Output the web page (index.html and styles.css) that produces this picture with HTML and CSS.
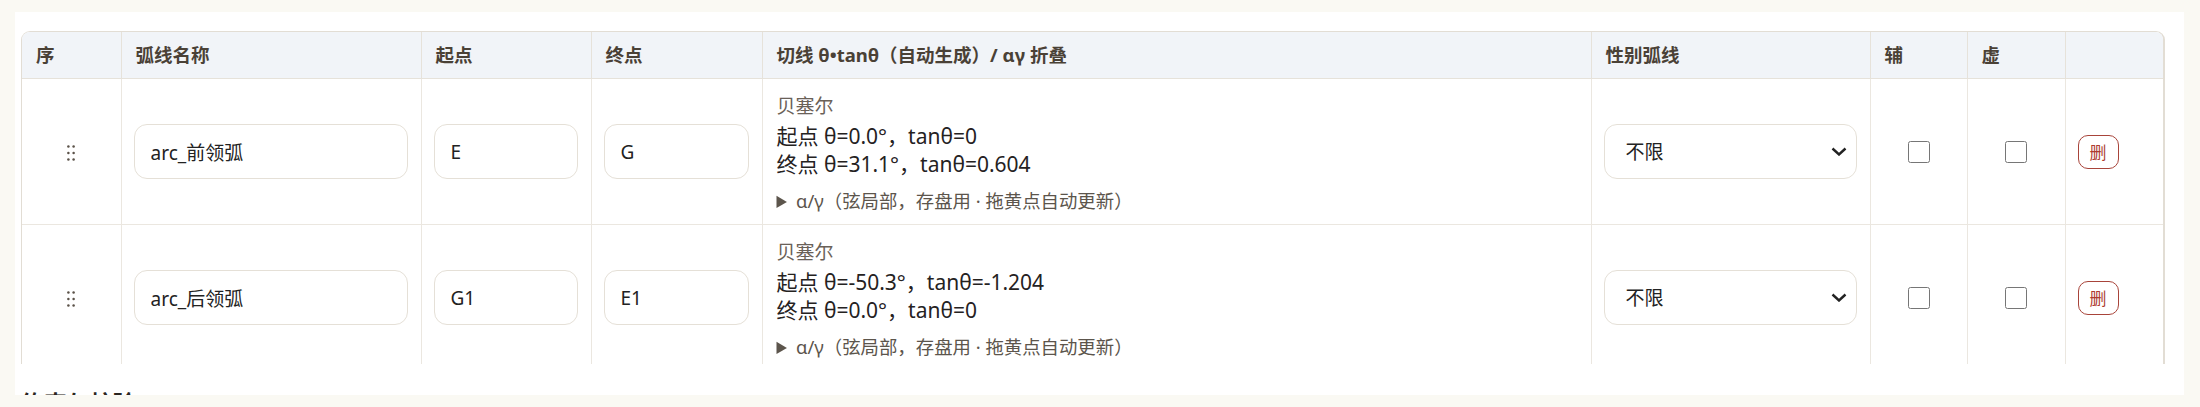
FILE: index.html
```html
<!DOCTYPE html>
<html lang="zh-CN">
<head>
  <meta charset="UTF-8">
  <meta name="viewport" content="width=device-width, initial-scale=1.0">
  <title>弧线编辑</title>
  <link rel="stylesheet" href="styles.css">
</head>
<body>
  <div class="card">

    <div class="table-wrap">
      <table class="arc-table">
        <colgroup>
          <col style="width: 99px">
          <col style="width: 300px">
          <col style="width: 170px">
          <col style="width: 171px">
          <col style="width: 829px">
          <col style="width: 279px">
          <col style="width: 97px">
          <col style="width: 98px">
          <col>
        </colgroup>
        <thead>
          <tr>
            <th>序</th>
            <th>弧线名称</th>
            <th>起点</th>
            <th>终点</th>
            <th>切线 θ•tanθ（自动生成）/ αγ 折叠</th>
            <th>性别弧线</th>
            <th>辅</th>
            <th>虚</th>
            <th></th>
          </tr>
        </thead>
        <tbody>
          <tr>
            <td class="handle-cell">
              <svg class="handle" viewBox="0 0 8 16">
                <circle cx="1.4" cy="1.5" r="1.25"></circle>
                <circle cx="6.6" cy="1.5" r="1.25"></circle>
                <circle cx="1.4" cy="8" r="1.25"></circle>
                <circle cx="6.6" cy="8" r="1.25"></circle>
                <circle cx="1.4" cy="14.5" r="1.25"></circle>
                <circle cx="6.6" cy="14.5" r="1.25"></circle>
              </svg>
            </td>
            <td><input class="field" type="text" value="arc_前领弧"></td>
            <td><input class="field" type="text" value="E"></td>
            <td><input class="field" type="text" value="G"></td>
            <td class="tangent-cell">
              <div class="curve-type">贝塞尔</div>
              <div class="tangent-line">起点 θ=0.0°，tanθ=0</div>
              <div class="tangent-line">终点 θ=31.1°，tanθ=0.604</div>
              <details class="alpha">
                <summary>α/γ（弦局部，存盘用 · 拖黄点自动更新）</summary>
              </details>
            </td>
            <td>
              <div class="select-box">
                <select class="field select">
                  <option>不限</option>
                </select>
                <svg class="chevron" viewBox="0 0 16 9"><path d="M1.5 1.5 L8 7.5 L14.5 1.5"></path></svg>
              </div>
            </td>
            <td class="check-cell"><input type="checkbox"></td>
            <td class="check-cell"><input type="checkbox"></td>
            <td><button class="del-btn">删</button></td>
          </tr>
          <tr>
            <td class="handle-cell">
              <svg class="handle" viewBox="0 0 8 16">
                <circle cx="1.4" cy="1.5" r="1.25"></circle>
                <circle cx="6.6" cy="1.5" r="1.25"></circle>
                <circle cx="1.4" cy="8" r="1.25"></circle>
                <circle cx="6.6" cy="8" r="1.25"></circle>
                <circle cx="1.4" cy="14.5" r="1.25"></circle>
                <circle cx="6.6" cy="14.5" r="1.25"></circle>
              </svg>
            </td>
            <td><input class="field" type="text" value="arc_后领弧"></td>
            <td><input class="field" type="text" value="G1"></td>
            <td><input class="field" type="text" value="E1"></td>
            <td class="tangent-cell">
              <div class="curve-type">贝塞尔</div>
              <div class="tangent-line">起点 θ=-50.3°，tanθ=-1.204</div>
              <div class="tangent-line">终点 θ=0.0°，tanθ=0</div>
              <details class="alpha">
                <summary>α/γ（弦局部，存盘用 · 拖黄点自动更新）</summary>
              </details>
            </td>
            <td>
              <div class="select-box">
                <select class="field select">
                  <option>不限</option>
                </select>
                <svg class="chevron" viewBox="0 0 16 9"><path d="M1.5 1.5 L8 7.5 L14.5 1.5"></path></svg>
              </div>
            </td>
            <td class="check-cell"><input type="checkbox"></td>
            <td class="check-cell"><input type="checkbox"></td>
            <td><button class="del-btn">删</button></td>
          </tr>
        </tbody>
      </table>
    </div>

    <h3 class="section-title">约束与校验</h3>

  </div>
</body>
</html>
```

FILE: styles.css
```css
body {
  margin: 0;
  padding: 12px 16px 0 15px;
  background: #faf9f3;
  font-family: "Noto Sans", "Noto Sans CJK SC", sans-serif;
  color: #2a2724;
}

.card {
  height: 383px;
  padding: 19px 19px 0 6px;
  box-sizing: border-box;
  background: #ffffff;
  overflow: hidden;
}

.table-wrap {
  max-height: 332px;
  overflow: hidden;
  border: 1px solid #e2ddd4;
  border-right-width: 2px;
  border-bottom: none;
  border-radius: 9px 9px 0 0;
}

.arc-table {
  width: 100%;
  table-layout: fixed;
  border-collapse: collapse;
}

.arc-table th {
  padding: 12px 14px;
  line-height: 22px;
  font-size: 18.5px;
  font-weight: 700;
  text-align: left;
  color: #4a4136;
  background: #f1f4f8;
  border-right: 1px solid #e6e2da;
  border-bottom: 1px solid #e6e2da;
}

.arc-table td {
  padding: 0 13px 0 12px;
  vertical-align: middle;
  border-right: 1px solid #ebe7e0;
  border-bottom: 1px solid #ebe7e0;
}

.arc-table th:last-child,
.arc-table td:last-child {
  border-right: none;
}

.handle-cell {
  text-align: center;
}

.handle {
  width: 8px;
  height: 16px;
  margin-left: 1px;
  vertical-align: middle;
  fill: #5b5249;
}

.field {
  display: block;
  width: 100%;
  height: 55px;
  box-sizing: border-box;
  padding: 0 16px;
  font-family: inherit;
  font-size: 19px;
  color: #222;
  background: #fff;
  border: 1px solid #e5e0d7;
  border-radius: 13px;
  outline: none;
}

.select-box {
  position: relative;
}

.select {
  appearance: none;
  -webkit-appearance: none;
  padding-left: 21px;
  padding-right: 30px;
}

.chevron {
  position: absolute;
  right: 10px;
  top: 23px;
  width: 16px;
  height: 9px;
  fill: none;
  stroke: #222;
  stroke-width: 2.4;
  pointer-events: none;
}

.tangent-cell.tangent-cell {
  vertical-align: top;
  padding: 14px 12px 11px 14px;
}

.curve-type {
  font-size: 19px;
  line-height: 26px;
  margin-bottom: 3px;
  color: #6a6158;
}

.tangent-line {
  font-size: 21px;
  line-height: 28px;
  color: #25221f;
}

.alpha {
  margin-top: 11px;
  font-size: 18.4px;
  line-height: 24px;
  color: #5c554c;
}

.alpha summary {
  cursor: pointer;
}

.check-cell {
  text-align: center;
}

.arc-table .check-cell {
  padding: 0;
}

.check-cell input {
  width: 22px;
  height: 22px;
  margin: 0;
  vertical-align: middle;
}

.del-btn {
  display: block;
  width: 41px;
  height: 34px;
  padding: 0;
  font-family: inherit;
  font-size: 17px;
  color: #ad3b30;
  background: #fff;
  border: 1.5px solid #a8443a;
  border-radius: 10px;
}

.section-title {
  margin: 21px 0 0;
  font-size: 23px;
  font-weight: 700;
  color: #2a2520;
}
```
